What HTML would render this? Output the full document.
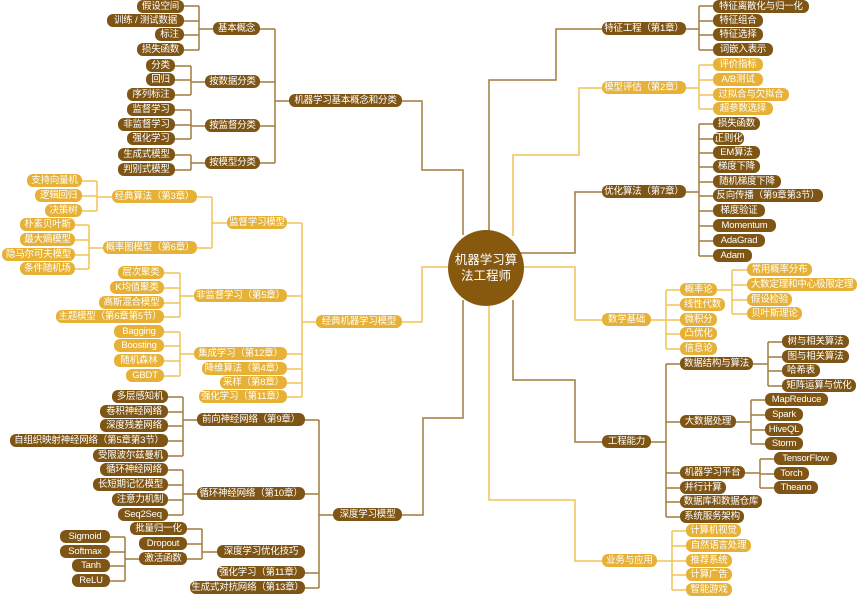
<!DOCTYPE html>
<html><head><meta charset="utf-8">
<style>
html,body{margin:0;padding:0;background:#fff;width:859px;height:596px;overflow:hidden;position:relative;
font-family:"Liberation Sans","Noto Sans CJK SC",sans-serif;}
.n{position:absolute;height:13px;line-height:13px;border-radius:6px;font-size:9.5px;letter-spacing:-0.2px;color:#fff;text-align:center;white-space:nowrap;overflow:visible;}
.b{background:#7e5515;}
.g{background:#e6b136;}
svg{position:absolute;left:0;top:0}
.c{position:absolute;left:448px;top:230px;width:76px;height:76px;border-radius:50%;background:#87590f;color:#fff;font-size:12.5px;line-height:16px;text-align:center;display:flex;align-items:center;justify-content:center}
</style></head><body>
<svg width="859" height="596" fill="none" stroke-width="1.5">
<g stroke="#a27c3e">
<path d="M213 29H199M199 6V50M184 6H199M184 21H199M184 35H199M184 50H199"/>
<path d="M205 82H191M191 66V95M175 66H191M175 80H191M175 95H191"/>
<path d="M205 126H191M191 110V139M175 110H191M175 125H191M175 139H191"/>
<path d="M205 163H191M191 155V170M175 155H191M175 170H191"/>
<path d="M289 101H275M275 29V163M260 29H275M260 82H275M260 126H275M260 163H275"/>
<path d="M402 101H422V170H463V235"/>
<path d="M197 420H183M183 397V456M168 397H183M168 412H183M168 426H183M168 441H183M168 456H183"/>
<path d="M197 494H183M183 470V515M168 470H183M168 485H183M168 500H183M168 515H183"/>
<path d="M139 559H125M125 537V581M110 537H125M110 552H125M110 566H125M110 581H125"/>
<path d="M217 552H202M202 529V559M187 529H202M187 544H202M187 559H202"/>
<path d="M333 515H319M319 420V588M305 420H319M305 494H319M305 573H319M305 588H319"/>
<path d="M402 515H423V418H463V300"/>
<path d="M686 29H699M699 6V50M713 6H699M713 21H699M713 35H699M713 50H699"/>
<path d="M489 232V80H556V29H602"/>
<path d="M686 192H699M699 124V256M713 124H699M713 139H699M713 153H699M713 167H699M713 182H699M713 196H699M713 211H699M713 226H699M713 241H699M713 256H699"/>
<path d="M520 253H575V192H602"/>
<path d="M651 442H666M666 364V517M680 364H666M680 422H666M680 473H666M680 488H666M680 502H666M680 517H666"/>
<path d="M753 364H768M768 342V386M782 342H768M782 357H768M782 371H768M782 386H768"/>
<path d="M736 422H751M751 400V444M765 400H751M765 415H751M765 430H751M765 444H751"/>
<path d="M745 473H760M760 459V488M774 459H760M774 474H760M774 488H760"/>
<path d="M513 300V380H575V442H602"/>
</g>
<g stroke="#f0c455">
<path d="M112 197H97M97 181V211M82 181H97M82 196H97M82 211H97"/>
<path d="M103 248H89M89 225V269M75 225H89M75 240H89M75 255H89M75 269H89"/>
<path d="M227 223H212M212 197V248M197 197H212M197 248H212"/>
<path d="M194 296H180M180 273V317M164 273H180M164 288H180M164 303H180M164 317H180"/>
<path d="M194 354H180M180 332V376M164 332H180M164 346H180M164 361H180M164 376H180"/>
<path d="M316 322H302M302 223V397M287 223H302M287 296H302M287 354H302M287 369H302M287 383H302M287 397H302"/>
<path d="M402 322H422V267H452"/>
<path d="M686 88H699M699 65V109M713 65H699M713 80H699M713 95H699M713 109H699"/>
<path d="M513 236V155H579V88H602"/>
<path d="M651 320H666M666 290V349M680 290H666M680 305H666M680 320H666M680 334H666M680 349H666"/>
<path d="M717 290H732M732 270V314M747 270H732M747 285H732M747 300H732M747 314H732"/>
<path d="M522 267H575V320H602"/>
<path d="M657 561H672M672 531V590M686 531H672M686 546H672M686 561H672M686 575H672M686 590H672"/>
<path d="M489 304V500H575V561H602"/>
</g>
</svg>
<div class="c">机器学习算<br>法工程师</div>

<div class="n b" style="left:137px;top:0px;width:47px">假设空间</div>
<div class="n b" style="left:107px;top:14px;width:77px">训练 / 测试数据</div>
<div class="n b" style="left:155px;top:28px;width:29px">标注</div>
<div class="n b" style="left:137px;top:43px;width:47px">损失函数</div>
<div class="n b" style="left:213px;top:22px;width:47px">基本概念</div>
<div class="n b" style="left:146px;top:59px;width:29px">分类</div>
<div class="n b" style="left:146px;top:73px;width:29px">回归</div>
<div class="n b" style="left:127px;top:88px;width:48px">序列标注</div>
<div class="n b" style="left:205px;top:75px;width:55px">按数据分类</div>
<div class="n b" style="left:127px;top:103px;width:48px">监督学习</div>
<div class="n b" style="left:118px;top:118px;width:57px">非监督学习</div>
<div class="n b" style="left:127px;top:132px;width:48px">强化学习</div>
<div class="n b" style="left:205px;top:119px;width:55px">按监督分类</div>
<div class="n b" style="left:118px;top:148px;width:57px">生成式模型</div>
<div class="n b" style="left:118px;top:163px;width:57px">判别式模型</div>
<div class="n b" style="left:205px;top:156px;width:55px">按模型分类</div>
<div class="n b" style="left:289px;top:94px;width:113px">机器学习基本概念和分类</div>

<div class="n g" style="left:27px;top:174px;width:55px">支持向量机</div>
<div class="n g" style="left:35px;top:189px;width:47px">逻辑回归</div>
<div class="n g" style="left:45px;top:204px;width:37px">决策树</div>
<div class="n g" style="left:112px;top:190px;width:85px">经典算法（第3章）</div>
<div class="n g" style="left:20px;top:218px;width:55px">朴素贝叶斯</div>
<div class="n g" style="left:20px;top:233px;width:55px">最大熵模型</div>
<div class="n g" style="left:2px;top:248px;width:73px">隐马尔可夫模型</div>
<div class="n g" style="left:20px;top:262px;width:55px">条件随机场</div>
<div class="n g" style="left:103px;top:241px;width:94px">概率图模型（第6章）</div>
<div class="n g" style="left:227px;top:216px;width:60px">监督学习模型</div>
<div class="n g" style="left:118px;top:266px;width:46px">层次聚类</div>
<div class="n g" style="left:110px;top:281px;width:54px">K均值聚类</div>
<div class="n g" style="left:99px;top:296px;width:65px">高斯混合模型</div>
<div class="n g" style="left:56px;top:310px;width:108px">主题模型（第6章第5节）</div>
<div class="n g" style="left:194px;top:289px;width:93px">非监督学习（第5章）</div>
<div class="n g" style="left:114px;top:325px;width:50px">Bagging</div>
<div class="n g" style="left:114px;top:339px;width:50px">Boosting</div>
<div class="n g" style="left:114px;top:354px;width:50px">随机森林</div>
<div class="n g" style="left:126px;top:369px;width:38px">GBDT</div>
<div class="n g" style="left:194px;top:347px;width:93px">集成学习（第12章）</div>
<div class="n g" style="left:202px;top:362px;width:85px">降维算法（第4章）</div>
<div class="n g" style="left:220px;top:376px;width:67px">采样（第8章）</div>
<div class="n g" style="left:199px;top:390px;width:88px">强化学习（第11章）</div>
<div class="n g" style="left:316px;top:315px;width:86px">经典机器学习模型</div>

<div class="n b" style="left:112px;top:390px;width:56px">多层感知机</div>
<div class="n b" style="left:100px;top:405px;width:68px">卷积神经网络</div>
<div class="n b" style="left:100px;top:419px;width:68px">深度残差网络</div>
<div class="n b" style="left:10px;top:434px;width:158px">自组织映射神经网络（第5章第3节）</div>
<div class="n b" style="left:93px;top:449px;width:75px">受限波尔兹曼机</div>
<div class="n b" style="left:197px;top:413px;width:108px">前向神经网络（第9章）</div>
<div class="n b" style="left:100px;top:463px;width:68px">循环神经网络</div>
<div class="n b" style="left:93px;top:478px;width:75px">长短期记忆模型</div>
<div class="n b" style="left:112px;top:493px;width:56px">注意力机制</div>
<div class="n b" style="left:118px;top:508px;width:50px">Seq2Seq</div>
<div class="n b" style="left:197px;top:487px;width:108px">循环神经网络（第10章）</div>
<div class="n b" style="left:130px;top:522px;width:57px">批量归一化</div>
<div class="n b" style="left:139px;top:537px;width:48px">Dropout</div>
<div class="n b" style="left:139px;top:552px;width:48px">激活函数</div>
<div class="n b" style="left:217px;top:545px;width:88px">深度学习优化技巧</div>
<div class="n b" style="left:60px;top:530px;width:50px">Sigmoid</div>
<div class="n b" style="left:60px;top:545px;width:50px">Softmax</div>
<div class="n b" style="left:72px;top:559px;width:38px">Tanh</div>
<div class="n b" style="left:72px;top:574px;width:38px">ReLU</div>
<div class="n b" style="left:217px;top:566px;width:88px">强化学习（第11章）</div>
<div class="n b" style="left:190px;top:581px;width:115px">生成式对抗网络（第13章）</div>
<div class="n b" style="left:333px;top:508px;width:69px">深度学习模型</div>

<div class="n b" style="left:602px;top:22px;width:84px">特征工程（第1章）</div>
<div class="n b" style="left:713px;top:0px;width:96px">特征离散化与归一化</div>
<div class="n b" style="left:713px;top:14px;width:50px">特征组合</div>
<div class="n b" style="left:713px;top:28px;width:50px">特征选择</div>
<div class="n b" style="left:713px;top:43px;width:60px">词嵌入表示</div>
<div class="n g" style="left:602px;top:81px;width:84px">模型评估（第2章）</div>
<div class="n g" style="left:713px;top:58px;width:50px">评价指标</div>
<div class="n g" style="left:713px;top:73px;width:50px">A/B测试</div>
<div class="n g" style="left:713px;top:88px;width:76px">过拟合与欠拟合</div>
<div class="n g" style="left:713px;top:102px;width:60px">超参数选择</div>
<div class="n b" style="left:602px;top:185px;width:84px">优化算法（第7章）</div>
<div class="n b" style="left:713px;top:117px;width:47px">损失函数</div>
<div class="n b" style="left:713px;top:132px;width:31px">正则化</div>
<div class="n b" style="left:713px;top:146px;width:47px">EM算法</div>
<div class="n b" style="left:713px;top:160px;width:47px">梯度下降</div>
<div class="n b" style="left:713px;top:175px;width:68px">随机梯度下降</div>
<div class="n b" style="left:713px;top:189px;width:110px">反向传播（第9章第3节）</div>
<div class="n b" style="left:713px;top:204px;width:52px">梯度验证</div>
<div class="n b" style="left:713px;top:219px;width:63px">Momentum</div>
<div class="n b" style="left:713px;top:234px;width:52px">AdaGrad</div>
<div class="n b" style="left:713px;top:249px;width:39px">Adam</div>

<div class="n g" style="left:602px;top:313px;width:49px">数学基础</div>
<div class="n g" style="left:680px;top:283px;width:37px">概率论</div>
<div class="n g" style="left:680px;top:298px;width:45px">线性代数</div>
<div class="n g" style="left:680px;top:313px;width:37px">微积分</div>
<div class="n g" style="left:680px;top:327px;width:37px">凸优化</div>
<div class="n g" style="left:680px;top:342px;width:37px">信息论</div>
<div class="n g" style="left:747px;top:263px;width:65px">常用概率分布</div>
<div class="n g" style="left:747px;top:278px;width:110px">大数定理和中心极限定理</div>
<div class="n g" style="left:747px;top:293px;width:45px">假设检验</div>
<div class="n g" style="left:747px;top:307px;width:55px">贝叶斯理论</div>

<div class="n b" style="left:602px;top:435px;width:49px">工程能力</div>
<div class="n b" style="left:680px;top:357px;width:73px">数据结构与算法</div>
<div class="n b" style="left:782px;top:335px;width:67px">树与相关算法</div>
<div class="n b" style="left:782px;top:350px;width:67px">图与相关算法</div>
<div class="n b" style="left:782px;top:364px;width:38px">哈希表</div>
<div class="n b" style="left:782px;top:379px;width:74px">矩阵运算与优化</div>
<div class="n b" style="left:680px;top:415px;width:56px">大数据处理</div>
<div class="n b" style="left:765px;top:393px;width:63px">MapReduce</div>
<div class="n b" style="left:765px;top:408px;width:38px">Spark</div>
<div class="n b" style="left:765px;top:423px;width:38px">HiveQL</div>
<div class="n b" style="left:765px;top:437px;width:38px">Storm</div>
<div class="n b" style="left:680px;top:466px;width:65px">机器学习平台</div>
<div class="n b" style="left:774px;top:452px;width:63px">TensorFlow</div>
<div class="n b" style="left:774px;top:467px;width:35px">Torch</div>
<div class="n b" style="left:774px;top:481px;width:44px">Theano</div>
<div class="n b" style="left:680px;top:481px;width:46px">并行计算</div>
<div class="n b" style="left:680px;top:495px;width:82px">数据库和数据仓库</div>
<div class="n b" style="left:680px;top:510px;width:64px">系统服务架构</div>

<div class="n g" style="left:602px;top:554px;width:55px">业务与应用</div>
<div class="n g" style="left:686px;top:524px;width:55px">计算机视觉</div>
<div class="n g" style="left:686px;top:539px;width:65px">自然语言处理</div>
<div class="n g" style="left:686px;top:554px;width:46px">推荐系统</div>
<div class="n g" style="left:686px;top:568px;width:46px">计算广告</div>
<div class="n g" style="left:686px;top:583px;width:46px">智能游戏</div>
</body></html>
